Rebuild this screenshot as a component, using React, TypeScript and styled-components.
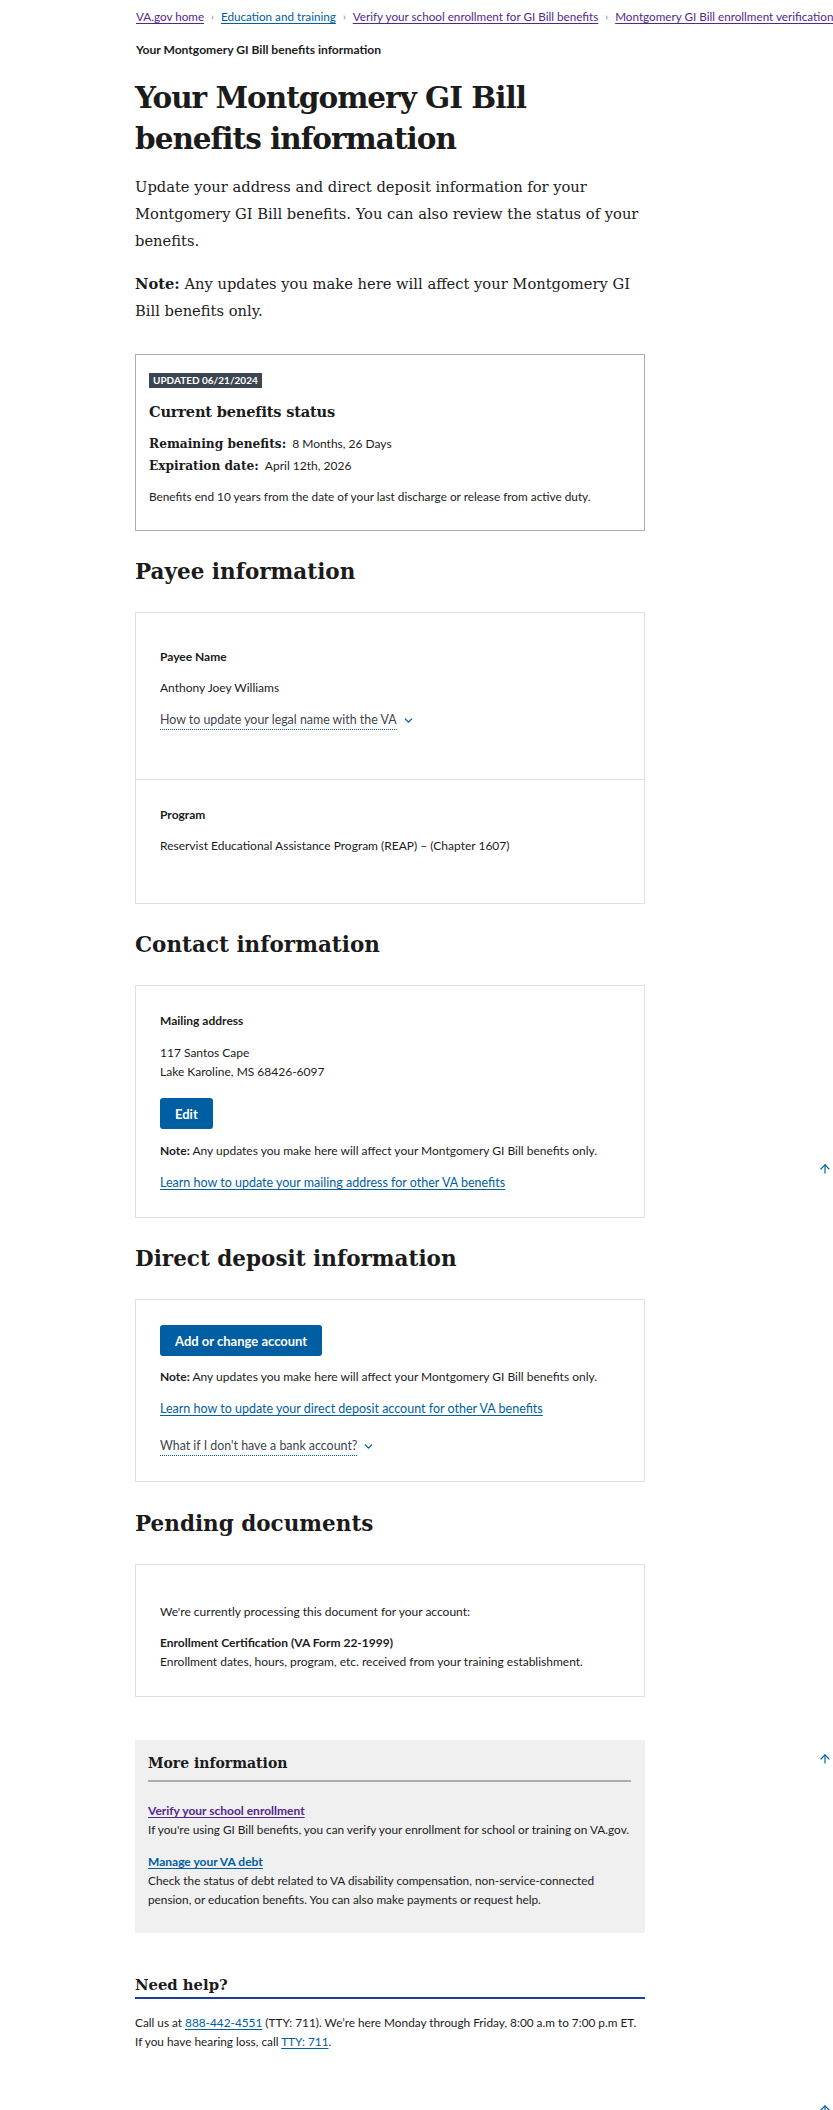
import styled, { createGlobalStyle } from 'styled-components';
import { ChevronDown, ArrowUp } from 'lucide-react';

const GlobalStyle = createGlobalStyle`
  * { box-sizing: border-box; }
  html, body { margin: 0; padding: 0; background: #ffffff; }
  body {
    font-family: 'Lato', 'Liberation Sans', sans-serif;
    color: #1b1b1b;
    overflow-x: hidden;
  }
`;

const sans = `'Lato', 'Liberation Sans', sans-serif`;
const serif = `'DejaVu Serif', 'Liberation Serif', serif`;

const Page = styled.div`
  position: relative;
  width: 833px;
  min-height: 2110px;
  overflow: hidden;
`;

const Breadcrumbs = styled.nav`
  padding: 6px 0 0 136px;
  white-space: nowrap;
`;

const CrumbList = styled.ol`
  display: flex;
  align-items: center;
  gap: 7px;
  margin: 0;
  padding: 0;
  list-style: none;
  font-size: 11.7px;
  line-height: 20px;
`;

const CrumbLink = styled.a<{ visited?: boolean }>`
  color: ${(p) => (p.visited ? '#54278f' : '#005ea2')};
  text-decoration: underline;
  text-underline-offset: 2px;
`;

const CrumbSep = styled.span`
  color: #71767a;
  font-size: 10px;
`;

const CurrentCrumb = styled.div`
  margin: 14px 0 0 136px;
  font-size: 12.1px;
  line-height: 19px;
  font-weight: 700;
`;

const Main = styled.main`
  width: 510px;
  margin-left: 135px;
  padding-bottom: 60px;
`;

const Title = styled.h1`
  font-family: ${serif};
  font-size: 29.5px;
  line-height: 41px;
  font-weight: 700;
  margin: 18px 0 0;
  letter-spacing: -1px;
`;

const Intro = styled.p`
  font-family: ${serif};
  font-size: 14.7px;
  line-height: 27px;
  margin: 14px 0 0;
`;

const Lead = styled.p`
  font-family: ${serif};
  font-size: 14.7px;
  line-height: 27px;
  margin: 16px 0 0;
`;

const StatusCard = styled.section`
  margin-top: 30px;
  border: 1px solid #a9aeb1;
  padding: 13px 13px 24px;
`;

const Badge = styled.span`
  display: inline-block;
  background: #3d4551;
  color: #ffffff;
  font-size: 10px;
  line-height: 15px;
  padding: 0 4px;
  font-weight: 700;
  text-transform: uppercase;
`;

const CardTitle = styled.h3`
  font-family: ${serif};
  font-size: 14.6px;
  line-height: 24px;
  font-weight: 700;
  margin: 12px 0 0;
  letter-spacing: -0.2px;
`;

const StatList = styled.dl`
  margin: 9px 0 0;
`;

const StatRow = styled.div`
  display: flex;
  align-items: baseline;
  gap: 6px;
  height: 21.5px;
`;

const StatLabel = styled.dt`
  font-family: ${serif};
  font-weight: 700;
  font-size: 12.2px;
  line-height: 21.5px;
`;

const StatValue = styled.dd`
  margin: 0;
  font-size: 12px;
  line-height: 21.5px;
`;

const SmallText = styled.p`
  font-size: 11.8px;
  line-height: 19px;
  margin: 11px 0 0;
`;

const SectionHeading = styled.h2<{ gap?: number }>`
  font-family: ${serif};
  font-size: 21.5px;
  line-height: 32px;
  font-weight: 700;
  margin: ${(p) => p.gap ?? 25}px 0 24px;
`;

const Panel = styled.section`
  border: 1px solid #dfe1e2;
`;

const PanelSection = styled.div<{ top: number; bottom: number; divided?: boolean }>`
  padding: ${(p) => p.top}px 24px ${(p) => p.bottom}px;
  border-top: ${(p) => (p.divided ? '1px solid #dfe1e2' : 'none')};
`;

const FieldLabel = styled.h4<{ gap?: number }>`
  font-size: 12px;
  line-height: 19px;
  font-weight: 700;
  margin: ${(p) => p.gap ?? 0}px 0 0;
`;

const FieldValue = styled.p<{ gap?: number }>`
  font-size: 12px;
  line-height: 19px;
  margin: ${(p) => p.gap ?? 12}px 0 0;
`;

const Disclosure = styled.button<{ gap?: number }>`
  display: inline-flex;
  align-items: center;
  gap: 5px;
  margin-top: ${(p) => p.gap ?? 13}px;
  padding: 0;
  border: none;
  background: none;
  font-family: ${sans};
  font-size: 12.4px;
  line-height: 19px;
  color: #3d4551;
  cursor: pointer;

  span {
    border-bottom: 1.5px dotted #005ea2;
  }

  svg {
    color: #005ea2;
  }
`;

const PrimaryButton = styled.button<{ gap?: number }>`
  display: block;
  margin-top: ${(p) => p.gap ?? 0}px;
  height: 31px;
  padding: 0 15px;
  border: none;
  border-radius: 3px;
  background: #005ea2;
  color: #ffffff;
  font-family: ${sans};
  font-size: 13px;
  font-weight: 700;
`;

const Note = styled.p<{ gap?: number }>`
  font-size: 12px;
  line-height: 19px;
  margin: ${(p) => p.gap ?? 12}px 0 0;

  strong {
    font-weight: 700;
  }
`;

const TextLink = styled.a`
  color: #005ea2;
  text-decoration: underline;
  text-underline-offset: 2px;
`;

const BlockLink = styled(TextLink)`
  display: block;
  font-size: 12.5px;
  line-height: 19px;
  margin-top: 13px;
`;

const MoreInfo = styled.aside`
  margin-top: 43px;
  background: #f0f0f0;
  padding: 11px 14px 24px 13px;
`;

const MoreInfoTitle = styled.h3`
  font-family: ${serif};
  font-size: 14px;
  line-height: 24px;
  font-weight: 700;
  margin: 0;
  padding-bottom: 5px;
  border-bottom: 2px solid #a9aeb1;
`;

const Resource = styled.div<{ gap: number }>`
  margin-top: ${(p) => p.gap}px;
`;

const ResourceLink = styled.a<{ visited?: boolean }>`
  display: block;
  font-size: 12px;
  line-height: 19px;
  font-weight: 700;
  color: ${(p) => (p.visited ? '#54278f' : '#005ea2')};
  text-decoration: underline;
  text-underline-offset: 2px;
`;

const ResourceText = styled.p`
  font-size: 11.8px;
  line-height: 19px;
  margin: 0;
`;

const HelpHeading = styled.h2`
  font-family: ${serif};
  font-size: 14.8px;
  line-height: 24px;
  font-weight: 700;
  margin: 40px 0 0;
  padding-bottom: 0;
  border-bottom: 2px solid #1a3da3;
`;

const HelpText = styled.p`
  font-size: 11.8px;
  line-height: 19px;
  margin: 14px 0 0;
`;

const BackToTop = styled.a<{ top: number }>`
  position: absolute;
  left: 818px;
  top: ${(p) => p.top}px;
  color: #005ea2;
  display: flex;
`;

export default function App() {
  return (
    <Page>
      <GlobalStyle />
      <Breadcrumbs aria-label="Breadcrumb">
        <CrumbList>
          <li><CrumbLink href="#" visited>VA.gov home</CrumbLink></li>
          <CrumbSep>›</CrumbSep>
          <li><CrumbLink href="#">Education and training</CrumbLink></li>
          <CrumbSep>›</CrumbSep>
          <li><CrumbLink href="#" visited>Verify your school enrollment for GI Bill benefits</CrumbLink></li>
          <CrumbSep>›</CrumbSep>
          <li><CrumbLink href="#" visited>Montgomery GI Bill enrollment verification</CrumbLink></li>
        </CrumbList>
      </Breadcrumbs>
      <CurrentCrumb>Your Montgomery GI Bill benefits information</CurrentCrumb>

      <Main>
        <Title>
          Your Montgomery GI Bill
          <br />
          benefits information
        </Title>
        <Intro>
          Update your address and direct deposit information for your Montgomery GI Bill benefits. You can
          also review the status of your benefits.
        </Intro>
        <Lead>
          <strong>Note:</strong> Any updates you make here will affect your Montgomery GI Bill benefits only.
        </Lead>

        <StatusCard>
          <Badge>Updated 06/21/2024</Badge>
          <CardTitle>Current benefits status</CardTitle>
          <StatList>
            <StatRow>
              <StatLabel>Remaining benefits:</StatLabel>
              <StatValue>8 Months, 26 Days</StatValue>
            </StatRow>
            <StatRow>
              <StatLabel>Expiration date:</StatLabel>
              <StatValue>April 12th, 2026</StatValue>
            </StatRow>
          </StatList>
          <SmallText>Benefits end 10 years from the date of your last discharge or release from active duty.</SmallText>
        </StatusCard>

        <SectionHeading>Payee information</SectionHeading>
        <Panel>
          <PanelSection top={34} bottom={49}>
            <FieldLabel>Payee Name</FieldLabel>
            <FieldValue>Anthony Joey Williams</FieldValue>
            <Disclosure>
              <span>How to update your legal name with the VA</span>
              <ChevronDown size={13} strokeWidth={2.5} />
            </Disclosure>
          </PanelSection>
          <PanelSection top={25} bottom={48} divided>
            <FieldLabel>Program</FieldLabel>
            <FieldValue>Reservist Educational Assistance Program (REAP) – (Chapter 1607)</FieldValue>
          </PanelSection>
        </Panel>

        <SectionHeading>Contact information</SectionHeading>
        <Panel>
          <PanelSection top={25} bottom={25}>
            <FieldLabel>Mailing address</FieldLabel>
            <FieldValue gap={13}>
              117 Santos Cape
              <br />
              Lake Karoline, MS 68426-6097
            </FieldValue>
            <PrimaryButton gap={17}>Edit</PrimaryButton>
            <Note gap={12}>
              <strong>Note:</strong> Any updates you make here will affect your Montgomery GI Bill benefits only.
            </Note>
            <BlockLink href="#">Learn how to update your mailing address for other VA benefits</BlockLink>
          </PanelSection>
        </Panel>

        <SectionHeading>Direct deposit information</SectionHeading>
        <Panel>
          <PanelSection top={25} bottom={25}>
            <PrimaryButton>Add or change account</PrimaryButton>
            <Note gap={11}>
              <strong>Note:</strong> Any updates you make here will affect your Montgomery GI Bill benefits only.
            </Note>
            <BlockLink href="#">Learn how to update your direct deposit account for other VA benefits</BlockLink>
            <Disclosure gap={18}>
              <span>What if I don't have a bank account?</span>
              <ChevronDown size={13} strokeWidth={2.5} />
            </Disclosure>
          </PanelSection>
        </Panel>

        <SectionHeading gap={26}>Pending documents</SectionHeading>
        <Panel>
          <PanelSection top={37} bottom={25}>
            <FieldValue gap={0}>We're currently processing this document for your account:</FieldValue>
            <FieldLabel as="p" gap={12}>Enrollment Certification (VA Form 22-1999)</FieldLabel>
            <FieldValue gap={0}>Enrollment dates, hours, program, etc. received from your training establishment.</FieldValue>
          </PanelSection>
        </Panel>

        <MoreInfo>
          <MoreInfoTitle>More information</MoreInfoTitle>
          <Resource gap={19}>
            <ResourceLink href="#" visited>Verify your school enrollment</ResourceLink>
            <ResourceText>If you're using GI Bill benefits, you can verify your enrollment for school or training on VA.gov.</ResourceText>
          </Resource>
          <Resource gap={13}>
            <ResourceLink href="#">Manage your VA debt</ResourceLink>
            <ResourceText>
              Check the status of debt related to VA disability compensation, non-service-connected pension, or
              education benefits. You can also make payments or request help.
            </ResourceText>
          </Resource>
        </MoreInfo>

        <HelpHeading>Need help?</HelpHeading>
        <HelpText>
          Call us at <TextLink href="#">888-442-4551</TextLink> (TTY: 711). We’re here Monday through Friday, 8:00 a.m
          to 7:00 p.m ET.
          <br />
          If you have hearing loss, call <TextLink href="#">TTY: 711</TextLink>.
        </HelpText>
      </Main>

      <BackToTop href="#" top={1162} aria-label="Back to top">
        <ArrowUp size={14} strokeWidth={2} />
      </BackToTop>
      <BackToTop href="#" top={1752} aria-label="Back to top">
        <ArrowUp size={14} strokeWidth={2} />
      </BackToTop>
      <BackToTop href="#" top={2103} aria-label="Back to top">
        <ArrowUp size={14} strokeWidth={2} />
      </BackToTop>
    </Page>
  );
}
